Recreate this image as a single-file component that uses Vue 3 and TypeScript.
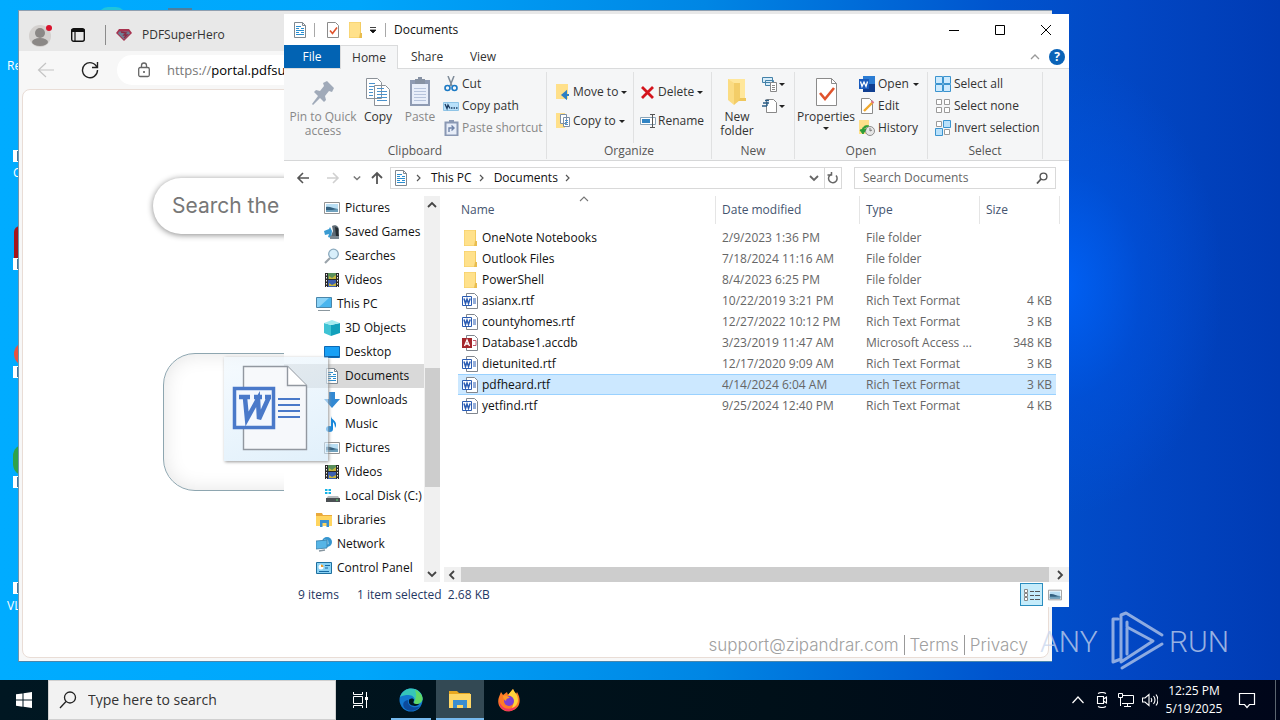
<script setup lang="ts">
interface TreeItem {
  icon: string
  label: string
  root?: boolean
  active?: boolean
}
interface FileRow {
  icon: string
  name: string
  date: string
  type: string
  size: string
  selected?: boolean
}

const tree: TreeItem[] = [
  { icon: 'picture', label: 'Pictures' },
  { icon: 'games', label: 'Saved Games' },
  { icon: 'searches', label: 'Searches' },
  { icon: 'video', label: 'Videos' },
  { icon: 'pc', label: 'This PC', root: true },
  { icon: 'cube', label: '3D Objects' },
  { icon: 'desktop', label: 'Desktop' },
  { icon: 'doc', label: 'Documents', active: true },
  { icon: 'download', label: 'Downloads' },
  { icon: 'music', label: 'Music' },
  { icon: 'picture', label: 'Pictures' },
  { icon: 'video', label: 'Videos' },
  { icon: 'disk', label: 'Local Disk (C:)' },
  { icon: 'libraries', label: 'Libraries', root: true },
  { icon: 'network', label: 'Network', root: true },
  { icon: 'control', label: 'Control Panel', root: true },
]

const files: FileRow[] = [
  { icon: 'folder', name: 'OneNote Notebooks', date: '2/9/2023 1:36 PM', type: 'File folder', size: '' },
  { icon: 'folder', name: 'Outlook Files', date: '7/18/2024 11:16 AM', type: 'File folder', size: '' },
  { icon: 'folder', name: 'PowerShell', date: '8/4/2023 6:25 PM', type: 'File folder', size: '' },
  { icon: 'rtf', name: 'asianx.rtf', date: '10/22/2019 3:21 PM', type: 'Rich Text Format', size: '4 KB' },
  { icon: 'rtf', name: 'countyhomes.rtf', date: '12/27/2022 10:12 PM', type: 'Rich Text Format', size: '3 KB' },
  { icon: 'access', name: 'Database1.accdb', date: '3/23/2019 11:47 AM', type: 'Microsoft Access ...', size: '348 KB' },
  { icon: 'rtf', name: 'dietunited.rtf', date: '12/17/2020 9:09 AM', type: 'Rich Text Format', size: '3 KB' },
  { icon: 'rtf', name: 'pdfheard.rtf', date: '4/14/2024 6:04 AM', type: 'Rich Text Format', size: '3 KB', selected: true },
  { icon: 'rtf', name: 'yetfind.rtf', date: '9/25/2024 12:40 PM', type: 'Rich Text Format', size: '4 KB' },
]
</script>

<template>
  <div class="screen">
    <svg class="defs" aria-hidden="true">
      <symbol id="i-doc" viewBox="0 0 16 16">
        <path d="M2.5.5h8l3 3v12h-11z" fill="#fff" stroke="#7f8890" />
        <path d="M10.500.5v3h3" fill="none" stroke="#7f8890" />
        <path d="M4 4.500h5M4 6.500h3M9 6.500h3M4 8.500h8M4 10.500h3M9 10.500h3M4 12.500h8" stroke="#2a8ed0" />
      </symbol>
      <symbol id="i-check" viewBox="0 0 16 16">
        <path d="M2.500.5h8l3 3v12h-11z" fill="#fff" stroke="#8b8b8b" />
        <path d="M5 8.500l2.500 3L12 5.500" fill="none" stroke="#e0532c" stroke-width="1.600" />
      </symbol>
      <symbol id="i-folder" viewBox="0 0 16 16">
        <path d="M2 0h12v11l1 1v4H2z" fill="#f3cc62" />
        <path d="M2.500.5H13v15H2.500z" fill="#ffe18b" />
        <path d="M13 11h2v5h-3z" fill="#e9bd4f" />
      </symbol>
      <symbol id="i-bigfolder" viewBox="0 0 20 28">
        <path d="M1 1h17v21H1z" fill="#ffe79b" />
        <path d="M1 1l6 4v22l-6-5z" fill="#fbdc83" />
        <path d="M7 5h6v17l-6 5z" fill="#f3cd68" />
        <path d="M13 20h6v3h-8z" fill="#efc75c" />
      </symbol>
      <symbol id="i-rtf" viewBox="0 0 16 16">
        <path d="M4.500.5h8l3 3v12h-11z" fill="#fff" stroke="#80868e" />
        <path d="M11 6h3M11 8h3M11 10h3" stroke="#2b5cb3" />
        <path d="M.5 3.500h9v9h-9z" fill="#fff" stroke="#2b5cb3" />
        <path d="M2 5.500l1.500 5L5 6l1.500 4.500L8.200 5.500" fill="none" stroke="#2b5cb3" stroke-width="1.500" />
      </symbol>
      <symbol id="i-access" viewBox="0 0 16 16">
        <path d="M4.500.5h8l3 3v12h-11z" fill="#fff" stroke="#80868e" />
        <path d="M11 5.500h3v5h-3" fill="none" stroke="#c2566b" />
        <path d="M0 3h10v10H0z" fill="#a4262c" />
        <path d="M2.500 11L5 5l2.500 6M3.500 9h3" fill="none" stroke="#fff" stroke-width="1.300" />
      </symbol>
      <symbol id="i-picture" viewBox="0 0 16 16">
        <path d="M.5 2.500h15v11H.5z" fill="#fff" stroke="#949494" />
        <path d="M2 4h12v8H2z" fill="#b9def3" />
        <path d="M2 7c4-1 7 2 12 2v3H2z" fill="#33607f" />
        <path d="M2 10c4 0 8 0 12-1v3H2z" fill="#6fa1bd" />
      </symbol>
      <symbol id="i-games" viewBox="0 0 16 16">
        <path d="M8 2c3-2 7 0 7 4l-1 6H7l2-5z" fill="#5d6a74" />
        <path d="M11 3l3 1 1 8h-3z" fill="#252c31" />
        <path d="M0 7l5-2 1-2 2 4-1 7-3-1 1-3-4 1z" fill="#3a9bd2" />
        <path d="M6 12h9v3H6z" fill="#7b8790" />
      </symbol>
      <symbol id="i-searches" viewBox="0 0 16 16">
        <path d="M1 15l5-5" stroke="#9aa3aa" stroke-width="2.200" />
        <circle cx="9.500" cy="6" r="4.800" fill="#d8effb" stroke="#8aa9bd" stroke-width="1.300" />
      </symbol>
      <symbol id="i-video" viewBox="0 0 16 16">
        <path d="M1 1h14v14H1z" fill="#2a2a2a" />
        <path d="M4 1h8v6H4z" fill="#5a8f5b" />
        <path d="M4 8h8v7H4z" fill="#3c5fb0" />
        <path d="M5 4l3 2 4-3v4H5zM5 11l3 2 4-2v3H5z" fill="#c7b53d" />
        <path d="M2.500 2v13M13.500 2v13" stroke="#eee" stroke-dasharray="1.500 1.500" />
      </symbol>
      <symbol id="i-pc" viewBox="0 0 16 16">
        <path d="M.5 1.500h15v10H.5z" fill="#49b5ee" stroke="#4a86aa" />
        <path d="M1 2h12L3 11H1z" fill="#8bd3f7" />
        <path d="M2 14.500h12" stroke="#8b979e" />
      </symbol>
      <symbol id="i-cube" viewBox="0 0 16 16">
        <path d="M0 3l7 2v11l-7-3z" fill="#3fc3d4" />
        <path d="M7 5l9-2v10l-9 3z" fill="#12a0bb" />
        <path d="M0 3l8-3 8 3-9 2z" fill="#a4ebf0" />
      </symbol>
      <symbol id="i-desktop" viewBox="0 0 16 16">
        <path d="M.5 2.500h15v11H.5z" fill="#18a0f5" stroke="#0b69b5" />
        <path d="M1 12.500h14" stroke="#0a5fa8" />
      </symbol>
      <symbol id="i-download" viewBox="0 0 16 16">
        <path d="M5 0h6v7h5l-8 9-8-9h5z" fill="#3289d3" />
      </symbol>
      <symbol id="i-music" viewBox="0 0 16 16">
        <path d="M7 0c0 4 6 4 5 10l-1 2c0-3-1-5-2-6v7H7z" fill="#1587dc" />
        <ellipse cx="5.500" cy="13" rx="3.500" ry="3" fill="#1587dc" />
      </symbol>
      <symbol id="i-disk" viewBox="0 0 16 16">
        <path d="M1 1h2.500v2H1zM4.500 1H7v2H4.500zM1 4h2.500v2H1zM4.500 4H7v2H4.500z" fill="#13b3e6" />
        <path d="M4 8h10l2 3H2z" fill="#b9bec2" />
        <path d="M2 10h14v4H2z" fill="#4b5054" />
        <path d="M12 12h2" stroke="#5ee06c" />
      </symbol>
      <symbol id="i-libraries" viewBox="0 0 16 16">
        <path d="M0 1h6l1 2h9v11H0z" fill="#e9a93c" />
        <path d="M0 4h16v10H0z" fill="#ffd560" />
        <path d="M4 15V8h9v7h-2.500v-4h-4v4z" fill="#3a8fd0" />
      </symbol>
      <symbol id="i-network" viewBox="0 0 16 16">
        <circle cx="11" cy="6" r="5" fill="#3595cf" />
        <path d="M8 3l4 1 1 4-3 1z" fill="#84c8ea" />
        <path d="M0 5l11-1v8L0 13z" fill="#57b5e6" stroke="#3a7fa8" stroke-width=".8" />
        <path d="M3 15l6-1" stroke="#8796a0" stroke-width="1.500" />
      </symbol>
      <symbol id="i-control" viewBox="0 0 16 16">
        <path d="M.5 2.500h15v11H.5z" fill="#8bd2f4" stroke="#1e6f9e" />
        <circle cx="5" cy="7" r="2.500" fill="#fff" />
        <path d="M5 7V4.500A2.500 2.500 0 0 1 7.500 7z" fill="#eb9c28" />
        <path d="M9 5.500h5M9 8h3M3 11.500h10" stroke="#1769a2" />
      </symbol>
      <symbol id="i-chev" viewBox="0 0 10 10">
        <path d="M1 3l4 4 4-4" fill="none" stroke="currentColor" stroke-width="1.800" />
      </symbol>
      <symbol id="i-drop" viewBox="0 0 8 8">
        <path d="M1 3h6L4 6z" fill="#222" />
      </symbol>
      <symbol id="i-cells" viewBox="0 0 16 16">
        <path d="M.5.5h7v7h-7zM8.500.5h7v7h-7zM.5 8.500h7v7h-7zM8.500 8.500h7v7h-7z" fill="#cdeafd" stroke="#3b94cf" />
      </symbol>
      <symbol id="i-cellsnone" viewBox="0 0 16 16">
        <path d="M1.500 1.500h5v5h-5zM9.500 1.500h5v5h-5zM1.500 9.500h5v5h-5zM9.500 9.500h5v5h-5z" fill="#fff" stroke="#9a9a9a" />
      </symbol>
      <symbol id="i-cellsinv" viewBox="0 0 16 16">
        <path d="M1.500 1.500h5v5h-5zM9.500 9.500h5v5h-5z" fill="#fff" stroke="#9a9a9a" />
        <path d="M8.500.5h7v7h-7zM.5 8.500h7v7h-7z" fill="#b9e1fb" stroke="#3b94cf" />
      </symbol>
    </svg>

    <main class="desktop">
      <i class="peek peek-teal"></i>
      <i class="peek peek-brown"></i>
      <span class="shortcut s1">Re</span>
      <span class="shortcut s2"><i class="arrow"></i>C</span>
      <span class="shortcut s3"><i class="blob red"></i><i class="arrow"></i></span>
      <span class="shortcut s4"><i class="blob coral"></i><i class="arrow"></i></span>
      <span class="shortcut s5"><i class="blob green"></i><i class="arrow"></i></span>
      <span class="shortcut s6"><i class="arrow"></i>VL</span>

      <section class="browser">
        <div class="tabs">
          <svg class="avatar" viewBox="0 0 24 24">
            <circle cx="11" cy="13" r="11" fill="#d3d0ce" />
            <circle cx="11" cy="10" r="5" fill="#8b8886" />
            <ellipse cx="11" cy="19" rx="8" ry="4" fill="#8b8886" />
            <circle cx="20" cy="5" r="3" fill="#d8122c" />
          </svg>
          <svg class="spaces" viewBox="0 0 16 16">
            <rect x="1.700" y="1.700" width="12.600" height="12.600" rx="2" fill="none" stroke="#111" stroke-width="1.400" />
            <path d="M1.500 3.500h13" stroke="#111" stroke-width="3" />
            <path d="M5 5v9" stroke="#111" stroke-width="1.200" />
          </svg>
          <i class="divider"></i>
          <svg class="gem" viewBox="0 0 16 12">
            <path d="M3 0h10l3 4-8 8-8-8z" fill="#a8324f" />
            <path d="M3 2.500h10l1 2-6 6-6-6z" fill="#6f8096" />
            <path d="M5 3l5 1-2 2 3 0-3 3" fill="none" stroke="#8d2943" stroke-width="1.400" />
          </svg>
          <span class="tab-title">PDFSuperHero</span>
        </div>
        <div class="toolbar">
          <button class="nav-btn faded" aria-label="Back">
            <svg viewBox="0 0 18 18"><path d="M17 9H1m8-7L1.500 9 9 16" fill="none" stroke="#c4c4c4" stroke-width="1.200" /></svg>
          </button>
          <button class="nav-btn" aria-label="Refresh">
            <svg viewBox="0 0 18 18"><path d="M16 6.500A7.500 7.500 0 1 0 16.500 9M16.500 1v5.500H11" fill="none" stroke="#222" stroke-width="1.400" /></svg>
          </button>
          <div class="url">
            <svg viewBox="0 0 14 16"><rect x="1.700" y="5.500" width="10.600" height="9" rx="1.500" fill="none" stroke="#666" stroke-width="1.300" /><path d="M4.500 5V3.500a2.500 2.500 0 0 1 5 0V5" fill="none" stroke="#666" stroke-width="1.300" /><circle cx="7" cy="10" r="1" fill="#555" /></svg>
            <span><em>https://</em>portal.pdfsu</span>
          </div>
        </div>
        <div class="page">
          <input class="pill" type="text" placeholder="Search the" aria-label="Search the" />
          <div class="dropzone"></div>
          <footer class="page-foot">
            <a href="#">support@zipandrar.com</a><a href="#">Terms</a><a href="#">Privacy</a>
          </footer>
        </div>
      </section>

      <section class="explorer">
        <header class="titlebar">
          <svg class="i16"><use href="#i-doc" /></svg>
          <i class="tsep first"></i>
          <svg class="i16"><use href="#i-check" /></svg>
          <svg class="i16 qa"><use href="#i-folder" /></svg>
          <svg class="qdrop" viewBox="0 0 8 8"><path d="M1 1.500h6M1 4h6L4 7z" fill="#111" stroke="#111" stroke-width=".8" /></svg>
          <i class="tsep"></i>
          <h1>Documents</h1>
          <div class="winbtns">
            <button aria-label="Minimize"><svg viewBox="0 0 12 12"><path d="M1 6.500h10" stroke="#000" /></svg></button>
            <button aria-label="Maximize"><svg viewBox="0 0 12 12"><path d="M1.500 1.500h9v9h-9z" fill="none" stroke="#000" /></svg></button>
            <button aria-label="Close"><svg viewBox="0 0 12 12"><path d="M1 1l10 10M11 1L1 11" stroke="#000" /></svg></button>
          </div>
        </header>
        <nav class="menu">
          <button class="file">File</button>
          <button class="home">Home</button>
          <button>Share</button>
          <button>View</button>
          <span class="menu-end">
            <svg class="up" viewBox="0 0 10 10"><path d="M1 7l4-4 4 4" fill="none" stroke="#999" stroke-width="1.300" /></svg>
            <button class="help" aria-label="Help">?</button>
          </span>
        </nav>

        <div class="ribbon">
          <div class="group g-clip">
            <div class="tools">
              <button class="big dim pin">
                <svg viewBox="0 0 32 32"><path d="M16 7l4-2 7 7-2 4-3-1-4 5 1 4-2 2-4-4-7 7-1-1 6-8-4-4 2-2 4 1 4-5z" fill="#a0aab9" /></svg>
                <span>Pin to Quick</span>
                <span>access</span>
              </button>
              <button class="big copy">
                <svg viewBox="0 0 32 32">
                  <path d="M4.500 2.500h11l4 4v16h-15zM12.500 9.500h11l4 4v16h-15z" fill="#fff" stroke="#8b9198" />
                  <path d="M7 7.500h6M7 10.500h5M7 13.500h4M7 16.500h4M7 19.500h4M15 15.500h10M15 18.500h10M15 21.500h10M15 24.500h10M15 12.500h7" stroke="#4b92cc" />
                </svg>
                <span>Copy</span>
              </button>
              <button class="big dim paste">
                <svg viewBox="0 0 32 32">
                  <path d="M6 4h20v26H6z" fill="#8f9bb3" />
                  <path d="M8 8h16v20H8z" fill="#e8eefa" />
                  <path d="M11 3h3V1h4v2h3v5H11z" fill="#8792a4" />
                  <path d="M10 12.500h12M10 15.500h12M10 18.500h12M10 21.500h12M10 24.500h12" stroke="#b6c3dc" />
                </svg>
                <span>Paste</span>
              </button>
              <div class="stack">
                <button><svg class="i16" viewBox="0 0 16 16"><path d="M5 0l4 10M11 0L7 10" stroke="#7e8b98" stroke-width="1.500" /><circle cx="4.500" cy="12" r="2.500" fill="none" stroke="#1b79c4" stroke-width="1.600" /><circle cx="11.500" cy="12" r="2.500" fill="none" stroke="#1b79c4" stroke-width="1.600" /></svg>Cut</button>
                <button><svg class="i16" viewBox="0 0 16 16"><path d="M.5 4.500h15v8H.5z" fill="#b9e0fa" stroke="#8fc4e6" /><path d="M2 6l2 4.500L5 7l2 3.500M8 10h1.500M10.500 10H12M13 10h1.500" fill="none" stroke="#1c3d63" stroke-width="1.300" /></svg>Copy path</button>
                <button class="dim"><svg class="i16" viewBox="0 0 16 16"><path d="M2.500 2.500h12v13h-12z" fill="#e7edf8" stroke="#8a98b3" stroke-width="2" /><path d="M6 0h5v3H6z" fill="#8a98b3" /><path d="M6 12V8h5M8.500 5.500L11 8l-2.500 2.500" fill="none" stroke="#6f83a8" stroke-width="1.400" /></svg>Paste shortcut</button>
              </div>
            </div>
            <div class="caption">Clipboard</div>
          </div>
          <div class="group g-org">
            <div class="tools">
              <div class="stack loose left">
                <button><svg class="i16" viewBox="0 0 16 16"><path d="M1 0h12v15H1z" fill="#ffe08a" /><path d="M14 11h-4M11 8l-3.500 3 3.500 3z" fill="#2e7fc4" stroke="#2e7fc4" stroke-width="2" /></svg>Move to<svg class="drop"><use href="#i-drop" /></svg></button>
                <button><svg class="i16" viewBox="0 0 16 16"><path d="M1 0h9v15H1z" fill="#ffe08a" /><path d="M5.500 1.500h6v9h-6zM8.500 4.500h6v9h-6z" fill="#fff" stroke="#7c8fa5" /><path d="M10 7.500h3M10 9.500h3M10 11.500h3" stroke="#4b92cc" /></svg>Copy to<svg class="drop"><use href="#i-drop" /></svg></button>
              </div>
              <div class="stack loose right">
                <button><svg class="i16" viewBox="0 0 16 16"><path d="M2 3l11 11M13 3L2 14" stroke="#d4141c" stroke-width="2.800" /></svg>Delete<svg class="drop"><use href="#i-drop" /></svg></button>
                <button><svg class="i16" viewBox="0 0 16 16"><path d="M.5 4.500h15v7H.5z" fill="#fff" stroke="#8aa4b8" /><path d="M2 6h8v4H2z" fill="#2f83c4" /><path d="M10 1.500h5M10 14.500h5M12.500 1v14" stroke="#555" /></svg>Rename</button>
              </div>
            </div>
            <div class="caption">Organize</div>
          </div>
          <div class="group g-new">
            <div class="tools">
              <button class="big newf">
                <svg viewBox="-6 -2 32 32"><use href="#i-bigfolder" width="20" height="28" /></svg>
                <span>New</span>
                <span>folder</span>
              </button>
              <div class="stack tight">
                <button aria-label="New item"><svg class="i16" viewBox="0 0 16 16"><path d="M.5 1.500h10v5H.5zM3.500 4.500h8v5h-8z" fill="#d7ecf9" stroke="#4381a8" /><path d="M8.500 6.500h6v9h-6z" fill="#fff" stroke="#888" /><path d="M10 9.500h3M10 11.500h3M10 13.500h3" stroke="#888" /></svg><svg class="drop"><use href="#i-drop" /></svg></button>
                <button aria-label="Easy access"><svg class="i16" viewBox="0 0 16 16"><path d="M4.500 1.500h7l3 3v10h-10z" fill="#fff" stroke="#888" /><path d="M0 8h5M1 5h6M3 2.500h4M5 4v4" stroke="#2a5d86" stroke-width="1.300" /></svg><svg class="drop"><use href="#i-drop" /></svg></button>
              </div>
            </div>
            <div class="caption">New</div>
          </div>
          <div class="group g-open">
            <div class="tools">
              <button class="big props">
                <svg viewBox="0 0 32 32"><path d="M6.500 2.500h15l5 5v22h-20z" fill="#fff" stroke="#8b8b8b" /><path d="M21.500 2.500v5h5" fill="none" stroke="#8b8b8b" /><path d="M10 17l5 6 9-11" fill="none" stroke="#e0532c" stroke-width="2.600" /></svg>
                <span>Properties</span>
                <svg class="drop"><use href="#i-drop" /></svg>
              </button>
              <div class="stack">
                <button><svg class="i16" viewBox="0 0 16 16"><path d="M4 0h12v16H4z" fill="#2b7cd3" /><path d="M4 8h12v8H4z" fill="#103f91" /><path d="M0 3h10v10H0z" fill="#185abd" /><path d="M1.500 5.500L3 10.500l2-4.500 2 4.500 1.500-5" fill="none" stroke="#fff" stroke-width="1.300" /></svg>Open<svg class="drop"><use href="#i-drop" /></svg></button>
                <button><svg class="i16" viewBox="0 0 16 16"><path d="M2.500.5h8l3 3v12h-11z" fill="#fff" stroke="#8b8b8b" /><path d="M5 13l9-9" stroke="#f0a92f" stroke-width="2.400" /><path d="M12.500 3l2 2" stroke="#d8708b" stroke-width="2" /></svg>Edit</button>
                <button><svg class="i16" viewBox="0 0 16 16"><path d="M0 0h10v14H0z" fill="#ffe08a" /><circle cx="11" cy="11" r="4.500" fill="#e6e6e6" stroke="#8d8d8d" /><path d="M11 8v3l2-1" fill="none" stroke="#777" /><path d="M3 10c1-4 4-5 7-4M1 10l3 4 3-5z" fill="#2c9d38" stroke="#2c9d38" /></svg>History</button>
              </div>
            </div>
            <div class="caption">Open</div>
          </div>
          <div class="group g-sel">
            <div class="tools">
              <div class="stack">
                <button><svg class="i16"><use href="#i-cells" /></svg>Select all</button>
                <button><svg class="i16"><use href="#i-cellsnone" /></svg>Select none</button>
                <button><svg class="i16"><use href="#i-cellsinv" /></svg>Invert selection</button>
              </div>
            </div>
            <div class="caption">Select</div>
          </div>
        </div>

        <div class="navrow">
          <button aria-label="Back"><svg viewBox="0 0 14 14"><path d="M13 7H2M7 2L2 7l5 5" fill="none" stroke="#555" stroke-width="1.600" /></svg></button>
          <button aria-label="Forward" class="fwd"><svg viewBox="0 0 14 14"><path d="M1 7h11M7 2l5 5-5 5" fill="none" stroke="#d0d0d0" stroke-width="1.600" /></svg></button>
          <button aria-label="Recent" class="recent"><svg viewBox="0 0 10 10"><use href="#i-chev" /></svg></button>
          <button aria-label="Up"><svg viewBox="0 0 14 14"><path d="M7 13V2M2 7l5-5 5 5" fill="none" stroke="#555" stroke-width="1.800" /></svg></button>
          <div class="address">
            <svg class="i16"><use href="#i-doc" /></svg>
            <svg class="crumb" viewBox="0 0 8 8"><path d="M2 1l3 3-3 3" fill="none" stroke="#555" stroke-width="1.200" /></svg>
            <span>This PC</span>
            <svg class="crumb" viewBox="0 0 8 8"><path d="M2 1l3 3-3 3" fill="none" stroke="#555" stroke-width="1.200" /></svg>
            <span>Documents</span>
            <svg class="crumb" viewBox="0 0 8 8"><path d="M2 1l3 3-3 3" fill="none" stroke="#555" stroke-width="1.200" /></svg>
            <button class="dropdown" aria-label="Previous locations"><svg viewBox="0 0 10 10"><use href="#i-chev" /></svg></button>
            <button class="reload" aria-label="Refresh"><svg viewBox="0 0 12 12"><path d="M4 2.500a4.300 4.300 0 1 0 5 1M4.500 0v3h-4" fill="none" stroke="#666" stroke-width="1.500" /></svg></button>
          </div>
          <label class="find">
            <input type="text" placeholder="Search Documents" aria-label="Search Documents" />
            <svg viewBox="0 0 12 12"><circle cx="7.500" cy="4.500" r="3.400" fill="none" stroke="#555" stroke-width="1.400" /><path d="M5 7l-4 4.500" stroke="#555" stroke-width="1.800" /></svg>
          </label>
        </div>

        <div class="body">
          <ul class="tree">
            <li v-for="(t, i) in tree" :key="i" :class="{ root: t.root, active: t.active }">
              <svg class="i16"><use :href="'#i-' + t.icon" /></svg>{{ t.label }}
            </li>
          </ul>
          <div class="vscroll">
            <svg viewBox="0 0 10 10"><path d="M1 7l4-4 4 4" fill="none" stroke="#444" stroke-width="1.800" /></svg>
            <i></i>
            <svg viewBox="0 0 10 10"><use href="#i-chev" /></svg>
          </div>
          <div class="content">
            <table>
              <colgroup><col class="c1" /><col class="c2" /><col class="c3" /><col class="c4" /><col class="c5" /></colgroup>
              <thead>
                <tr>
                  <th class="sorted">Name<svg viewBox="0 0 10 10"><path d="M1 7l4-4 4 4" fill="none" stroke="#777" stroke-width="1.100" /></svg></th>
                  <th>Date modified</th>
                  <th>Type</th>
                  <th class="nobar">Size</th>
                  <th></th>
                </tr>
              </thead>
              <tbody>
                <tr v-for="f in files" :key="f.name" :class="{ selected: f.selected }">
                  <td class="name"><span><svg class="i16"><use :href="'#i-' + f.icon" /></svg>{{ f.name }}</span></td>
                  <td>{{ f.date }}</td>
                  <td>{{ f.type }}</td>
                  <td class="size">{{ f.size }}</td>
                </tr>
              </tbody>
            </table>
            <div class="hscroll">
              <svg viewBox="0 0 10 10"><path d="M7 1L3 5l4 4" fill="none" stroke="#444" stroke-width="1.800" /></svg>
              <i></i>
              <svg viewBox="0 0 10 10"><path d="M3 1l4 4-4 4" fill="none" stroke="#444" stroke-width="1.800" /></svg>
            </div>
          </div>
        </div>

        <footer class="status">
          <span class="count">9 items</span>
          <span>1 item selected&nbsp; 2.68 KB</span>
          <span class="views">
            <button class="on" aria-label="Details"><svg viewBox="0 0 16 14"><path d="M.5 1.500h3v3h-3zM.5 5.500h3v3h-3zM.5 9.500h3v3h-3z" fill="#fff" stroke="#888" /><path d="M6 3.500h4M11 3.500h5M6 7.500h4M11 7.500h5M6 11.500h4M11 11.500h5" stroke="#555" /></svg></button>
            <button aria-label="Large icons"><svg viewBox="0 0 16 16"><use href="#i-picture" /></svg></button>
          </span>
        </footer>
      </section>

      <div class="drag">
        <svg viewBox="0 0 80 88">
          <path d="M11.500 1.500h44l19 19v64h-63z" fill="#f7f8fb" fill-opacity=".9" stroke="#9298a0" stroke-width="1.400" />
          <path d="M55.500 1.500v19h19" fill="#fff" stroke="#9298a0" stroke-width="1.400" />
          <path d="M46 34h22M46 40h22M46 46h22M46 52h22" stroke="#4a79c9" stroke-width="2" />
          <path d="M2.500 23.500h39v39h-39z" fill="#f4f8fe" stroke="#4a79c9" stroke-width="3.500" />
          <path d="M7 32h11M22 32h8M33 32h6M13 33l2 21 11-20 1 20 10-22" fill="none" stroke="#4a79c9" stroke-width="4.500" />
        </svg>
      </div>

      <svg class="mark" viewBox="0 0 194 64">
        <g class="mark-text">
          <text x="2" y="44">ANY</text>
          <text x="131" y="44">RUN</text>
        </g>
        <path d="M80 11h-5v43l8-3V7l5-2 36 22M84 60l40-24M89 14v32M89 19l26 14-32 21" fill="none" stroke="#c9d6ee" stroke-opacity=".7" stroke-width="3" stroke-linejoin="round" stroke-linecap="round" />
      </svg>
    </main>

    <footer class="taskbar">
      <button class="task start" aria-label="Start"><svg viewBox="0 0 16 16"><path d="M0 2.300L6.500 1.400v6.200H0zM7.500 1.200L16 0v7.600H7.500zM0 8.500h6.500v6.200L0 13.800zM7.500 8.500H16V16l-8.500-1.200z" fill="#fff" /></svg></button>
      <label class="tasksearch">
        <svg viewBox="0 0 18 18"><circle cx="11" cy="6.500" r="5.500" fill="none" stroke="#222" stroke-width="1.300" /><path d="M7 10.500l-6 6.500" stroke="#222" stroke-width="1.300" /></svg>
        <input type="text" placeholder="Type here to search" aria-label="Type here to search" />
      </label>
      <button class="task view" aria-label="Task view"><svg viewBox="0 0 16 16"><path d="M1.500 0v2.500h9V0M1.500 16v-2.500h9V16M1.500 4.500h9v7h-9zM14.500 0v16" fill="none" stroke="#fff" /><path d="M13 5h3v3h-3z" fill="#fff" /></svg></button>
      <button class="task open" aria-label="Edge">
        <svg class="i24" viewBox="0 0 24 24">
          <circle cx="12" cy="12" r="11.500" fill="#1378d0" />
          <path d="M1 9C3 3 8 .5 12 .5c7 0 12 5 11.500 10.500-.5 4-4 5.500-7 5-2-.5-2-1.500-1-3 1-3-2-6-6-6-3 0-6 .5-8.500 2z" fill="#36c6b9" />
          <path d="M16 2c5 2 8 6 7.500 9.500-.5 3-4 5-7 4.500-2-.5-2-1.500-1-3 2-4 2-7 .5-11z" fill="#60d867" />
          <path d="M9 12c-1 5 4 9 12 6.500-4 5-12 6-16 1-2-4 0-7 4-7.500z" fill="#0c4a9c" />
          <path d="M10 12c1-2 5-2 5 0 0 1-1 2-.5 3 1 1 4 1.500 6 .5-1 2-4 3-7 2-3-.5-4-3-3.500-5.500z" fill="#001620" />
        </svg>
      </button>
      <button class="task open current" aria-label="File Explorer">
        <svg class="i24" viewBox="0 0 24 24"><path d="M1 3h8l2 2h11v15H1z" fill="#e9a820" /><path d="M1 6h22v14H1z" fill="#ffd766" /><path d="M5 20v-8h14v8h-4v-3H9v3z" fill="#3b8ed0" /></svg>
      </button>
      <button class="task" aria-label="Firefox">
        <svg class="i24" viewBox="0 0 24 24"><path d="M2 9l2-5 2 3 4-3 1 3 5-6c1 2 1 3 3 5l1-2c5 8 3 17-6 19C5 25-1 17 2 9z" fill="#ff7a26" /><path d="M16 1c1 3 5 5 5 11 0 4-3 7-6 8 2-4 3-12-4-13z" fill="#ffd43b" /><path d="M2 12c2 9 10 11 18 6-3 6-12 8-17 0z" fill="#f23660" /><circle cx="12" cy="13" r="5" fill="#7c3fd4" /><path d="M6 8c3-1 5 0 7 2-3 0-4 1-4 3-2-1-3-3-3-5z" fill="#ff9a2b" /></svg>
      </button>
      <div class="tray">
        <svg viewBox="0 0 16 16"><path d="M2.500 11L8 5l5.500 6" fill="none" stroke="#fff" stroke-width="1.200" /></svg>
        <svg viewBox="0 0 16 16"><path d="M3.500 4.500h6v7h-6zM9.500 7l3-2v6l-3-2M4 1.500q4-2 8 0M4 14.500q4 2 8 0" fill="none" stroke="#fff" stroke-width="1.100" /></svg>
        <svg viewBox="0 0 16 16"><path d="M4 3.500h11.500v8H4M9.500 11.500v3M6 14.500h7M.5 1.500h4v4h-4zM2.500 5.500v8.500" fill="none" stroke="#fff" /></svg>
        <svg viewBox="0 0 16 16"><path d="M.5 6v4h2.500l4 3.500v-11L3 6zM9 6q1.500 2 0 4M11.500 4q3 4 0 8M14 2.500q4 5.500 0 11" fill="none" stroke="#fff" stroke-width="1.100" /></svg>
        <div class="clock"><span>12:25 PM</span><span>5/19/2025</span></div>
        <svg class="note" viewBox="0 0 18 18"><path d="M1.500 2.500h15v11h-5L9 16.500l-2.500-3h-5z" fill="none" stroke="#fff" stroke-width="1.200" /></svg>
      </div>
    </footer>
  </div>
</template>

<style>
body {
  margin: 0;
}
</style>

<style scoped>
* {
  box-sizing: border-box;
}
.screen {
  display: flex;
  flex-direction: column;
  height: 100vh;
  overflow: hidden;
  font: 12px/16px "Open Sans", "Noto Sans", sans-serif;
  color: #111;
}
.defs {
  position: absolute;
  width: 0;
  height: 0;
}
button {
  font: inherit;
  color: inherit;
  background: none;
  border: 0;
  padding: 0;
  margin: 0;
}
input {
  font: inherit;
  border: 0;
  outline: 0;
  padding: 0;
  background: none;
  min-width: 0;
}
svg {
  display: block;
  flex: none;
}
.i16 {
  width: 16px;
  height: 16px;
}
.i24 {
  width: 24px;
  height: 24px;
}
.drop {
  width: 8px;
  height: 8px;
}

/* desktop */
.desktop {
  position: relative;
  flex: 1;
  min-height: 0;
  overflow: hidden;
  background:
    radial-gradient(ellipse 160px 230px at 83% 42%, #0060f4 0%, rgba(0, 84, 226, 0.5) 50%, rgba(0, 70, 200, 0) 100%),
    linear-gradient(90deg, #00acff 0%, #00a6fb 28%, #0086e4 55%, #0054ce 78%, #0247c4 88%, #003bb4 100%);
}
.peek {
  position: absolute;
  top: 7px;
  height: 10px;
}
.peek-teal {
  left: 98px;
  width: 28px;
  border-radius: 14px 14px 0 0;
  background: #20c4dc;
}
.peek-brown {
  left: 168px;
  width: 24px;
  top: 8px;
  background: #4d7f9f;
}
.shortcut {
  position: absolute;
  left: 7px;
  width: 20px;
  color: #fff;
  display: flex;
  flex-direction: column;
}
.arrow {
  width: 8px;
  height: 12px;
  margin-left: 6px;
  background: linear-gradient(90deg, #fff 50%, #44749c 50%);
  border: 1px solid #fff;
}
.blob {
  width: 12px;
  height: 32px;
  margin-left: 7px;
}
.red {
  background: #a5161c;
  border-radius: 6px 0 0 0;
}
.coral {
  background: #e8533f;
  border-radius: 12px 0 0 12px;
  height: 24px;
}
.green {
  background: #2fa24a;
  border-radius: 12px 0 0 12px;
  margin-left: 6px;
}
.s1 { top: 58px; }
.s2 {
  top: 150px;
  gap: 3px;
  text-indent: 6px;
}
.s3 { top: 226px; }
.s4 { top: 342px; }
.s5 { top: 444px; }
.s6 {
  top: 582px;
  gap: 4px;
}

/* browser */
.browser {
  position: absolute;
  left: 18px;
  top: 10px;
  right: 228px;
  bottom: 18px;
  display: flex;
  flex-direction: column;
  background: #f7f7f7;
  border-top: 1px solid #8f9fb0;
  border-left: 1px solid #6f96ad;
  border-bottom: 1px solid #4c86ab;
}
.tabs {
  height: 40px;
  background: #e8e8e8;
  display: flex;
  align-items: center;
  padding: 8px 0 0 10px;
}
.avatar {
  width: 24px;
  height: 24px;
}
.spaces {
  width: 16px;
  height: 16px;
  margin-left: 17px;
}
.divider {
  width: 1px;
  height: 20px;
  background: #8b8b8b;
  margin: 0 10px 0 19px;
}
.gem {
  width: 16px;
  height: 12px;
}
.tab-title {
  margin-left: 10px;
  color: #333;
}
.toolbar {
  height: 38px;
  display: flex;
  align-items: center;
  padding-left: 18px;
}
.nav-btn svg {
  width: 18px;
  height: 18px;
}
.nav-btn + .nav-btn {
  margin-left: 26px;
}
.url {
  flex: 1;
  height: 30px;
  margin-left: 18px;
  border-radius: 15px 0 0 15px;
  background: #fff;
  display: flex;
  align-items: center;
  gap: 16px;
  padding-left: 20px;
  font-size: 13px;
  color: #000;
}
.url svg {
  width: 14px;
  height: 16px;
}
.url em {
  font-style: normal;
  color: #777;
}
.page {
  flex: 1;
  min-height: 0;
  margin: 0 3px 3px;
  background: #fff;
  border: 1px solid #e9ddd6;
  border-radius: 8px;
  display: flex;
  flex-direction: column;
  align-items: stretch;
  padding: 88px 20px 0 130px;
}
.pill {
  height: 56px;
  flex: none;
  border-radius: 28px;
  box-shadow: 0 1px 6px #888;
  padding-left: 19px;
  font: 21px/56px Inter, "Open Sans", sans-serif;
}
.pill::placeholder {
  color: #777;
  opacity: 1;
}
.dropzone {
  flex: none;
  height: 138px;
  margin: 119px 0 0 10px;
  border: 1px solid #8ea6b0;
  border-radius: 32px;
  box-shadow: inset 0 0 20px #e4e4e4;
}
.page-foot {
  margin-top: auto;
  display: flex;
  justify-content: flex-end;
  padding-bottom: 2px;
  font: 17px/20px Inter, "Open Sans", sans-serif;
  font-weight: 300;
}
.page-foot a {
  color: #a0a0a0;
  text-decoration: none;
  padding: 0 5px;
}
.page-foot a + a {
  border-left: 1px solid #999;
}
.page-foot a:last-child {
  padding-right: 0;
}

/* file window */
.explorer {
  position: absolute;
  left: 284px;
  top: 14px;
  right: 211px;
  bottom: 73px;
  background: #fff;
  display: flex;
  flex-direction: column;
}
.titlebar {
  height: 31px;
  flex: none;
  display: flex;
  align-items: center;
  padding-left: 8px;
}
.tsep {
  width: 1px;
  height: 14px;
  background: #a8a8a8;
  margin: 0 8px 0 8px;
}
.tsep.first {
  margin: 0 10px 0 6px;
}
.qa {
  margin: 0 6px;
}
.qdrop {
  width: 8px;
  height: 8px;
}
h1 {
  margin: 0;
  font-size: 12px;
  font-weight: 400;
}
.winbtns {
  margin-left: auto;
  display: flex;
}
.winbtns button {
  width: 46px;
  height: 30px;
  display: grid;
  place-items: center;
}
.winbtns svg {
  width: 12px;
  height: 12px;
}
.menu {
  height: 24px;
  flex: none;
  display: flex;
  border-bottom: 1px solid #dadbdc;
}
.menu button {
  width: 56px;
  height: 24px;
  color: #333;
}
.menu .file {
  background: #0263b3;
  color: #fff;
  height: 23px;
}
.menu .home {
  width: 58px;
  background: #f5f6f7;
  border: 1px solid #dadbdc;
  border-bottom: 0;
  margin-right: 1px;
}
.menu-end {
  margin-left: auto;
  display: flex;
  align-items: center;
  gap: 9px;
  padding-right: 4px;
}
.up {
  width: 10px;
  height: 10px;
}
.menu .help {
  width: 16px;
  height: 16px;
  line-height: 16px;
  border-radius: 8px;
  background: #0a63b8;
  color: #fff;
  font-weight: 700;
}

.ribbon {
  height: 92px;
  flex: none;
  display: flex;
  background: #f5f6f7;
  border-bottom: 1px solid #d6d7d8;
  padding: 3px 0 1px;
  color: #333;
}
.group {
  display: flex;
  flex-direction: column;
  border-right: 1px solid #e0e1e2;
}
.g-clip { width: 263px; }
.g-org { width: 165px; }
.g-new { width: 83px; }
.g-open { width: 133px; }
.g-sel { width: 115px; }
.tools {
  flex: 1;
  display: flex;
}
.caption {
  height: 16px;
  text-align: center;
  color: #555;
}
.big {
  display: flex;
  flex-direction: column;
  align-items: center;
  line-height: 14px;
  padding-top: 4px;
  white-space: nowrap;
}
.big > svg:first-child {
  width: 32px;
  height: 32px;
  margin-bottom: 2px;
}
.dim {
  color: #888;
}
.big.pin { width: 78px; }
.big.copy { width: 32px; }
.big.paste { width: 52px; }
.stack {
  display: flex;
  flex-direction: column;
  align-items: flex-start;
  padding-top: 1px;
}
.stack button {
  height: 22px;
  display: flex;
  align-items: center;
  gap: 3px;
  white-space: nowrap;
}
.stack.tight button {
  gap: 0;
}
.loose {
  padding-top: 5px;
}
.loose button {
  height: 29px;
}
.left {
  width: 86px;
  padding-left: 8px;
}
.left button,
.right button {
  gap: 2px;
}
.right {
  border-left: 1px solid #e0e1e2;
  padding-left: 6px;
}
.big.newf { width: 50px; }
.big.props { width: 62px; }
.g-open .stack { padding-left: 2px; }
.g-sel .stack { padding-left: 7px; }
.g-clip .stack { margin-left: -3px; }

.navrow {
  height: 35px;
  flex: none;
  display: flex;
  align-items: center;
  padding: 0 13px 2px 12px;
}
.navrow > button svg {
  width: 14px;
  height: 14px;
}
.navrow > .fwd {
  margin-left: 16px;
}
.navrow > .recent {
  margin: 0 9px 0 13px;
  color: #777;
}
.navrow > .recent svg {
  width: 8px;
  height: 8px;
}
.address {
  flex: 1;
  height: 22px;
  margin-left: 6px;
  border: 1px solid #d9d9d9;
  display: flex;
  align-items: center;
  padding-left: 2px;
}
.crumb {
  width: 8px;
  height: 8px;
  margin: 0 8px 0 6px;
}
.dropdown {
  margin-left: auto;
  padding: 0 5px;
  color: #666;
}
.dropdown svg {
  width: 10px;
  height: 10px;
}
.reload {
  height: 20px;
  width: 17px;
  border-left: 1px solid #d9d9d9;
  padding-left: 2px;
}
.reload svg {
  width: 12px;
  height: 12px;
}
.find {
  width: 202px;
  height: 22px;
  margin-left: 12px;
  border: 1px solid #d9d9d9;
  display: flex;
  align-items: center;
  padding: 0 7px 0 8px;
}
.find input {
  flex: 1;
}
.find input::placeholder {
  color: #666;
  opacity: 1;
}
.find svg {
  width: 12px;
  height: 12px;
}

.body {
  flex: 1;
  min-height: 0;
  display: flex;
}
.tree {
  width: 140px;
  list-style: none;
  margin: 0;
  padding: 0;
  overflow: hidden;
}
.tree li {
  height: 24px;
  display: flex;
  align-items: center;
  gap: 5px;
  padding-left: 40px;
  white-space: nowrap;
}
.tree .root {
  padding-left: 32px;
}
.tree .active {
  background: #d9d9d9;
}
.vscroll {
  width: 16px;
  background: #f0f0f0;
  display: flex;
  flex-direction: column;
  align-items: center;
  justify-content: space-between;
  padding: 4px 0 3px;
  color: #444;
}
.vscroll svg,
.hscroll svg {
  width: 10px;
  height: 10px;
}
.vscroll i {
  width: 15px;
  height: 119px;
  background: #cdcdcd;
  margin-top: 76px;
}
.content {
  flex: 1;
  min-width: 0;
  display: flex;
  flex-direction: column;
  overflow: hidden;
}
table {
  table-layout: fixed;
  border-collapse: separate;
  border-spacing: 0;
  width: 602px;
  margin-left: 18px;
}
.c1 { width: 258px; }
.c2 { width: 144px; }
.c3 { width: 120px; }
.c4 { width: 76px; }
.c5 { width: 4px; }
th {
  height: 28px;
  padding: 0 0 0 6px;
  text-align: left;
  font-weight: 400;
  color: #44546f;
  border-right: 1px solid #e5e5e5;
  white-space: nowrap;
}
th:first-child {
  padding-left: 3px;
}
th.nobar {
  border-right: 0;
}
th:last-child {
  padding: 0;
}
.sorted {
  position: relative;
}
.sorted svg {
  position: absolute;
  top: -2px;
  left: 47%;
  width: 10px;
  height: 10px;
}
tbody::before {
  content: "";
  display: block;
  height: 3px;
}
td {
  height: 21px;
  padding: 0 0 0 6px;
  color: #666;
  white-space: nowrap;
}
td.name {
  padding-left: 4px;
  color: #111;
}
td.name span {
  display: flex;
  align-items: center;
  gap: 4px;
}
td.size {
  text-align: right;
  padding: 0 4px 0 0;
}
.selected td {
  background: #cce8ff;
  box-shadow: inset 0 1px #99d1ff, inset 0 -1px #99d1ff;
}
.hscroll {
  margin: auto 0 0 4px;
  height: 15px;
  background: #f0f0f0;
  display: flex;
  align-items: center;
  padding: 0 4px 0 3px;
}
.hscroll i {
  flex: 1;
  height: 15px;
  background: #cdcdcd;
  margin: 0 6px 0 4px;
}
.status {
  height: 25px;
  flex: none;
  display: flex;
  align-items: center;
  padding: 0 3px 0 14px;
  color: #1f3864;
}
.count {
  width: 59px;
}
.views {
  margin-left: auto;
  display: flex;
}
.views button {
  width: 23px;
  height: 23px;
  display: grid;
  place-items: center;
}
.views .on {
  background: #c5ecfb;
  border: 1px solid #2a8dbf;
}
.views svg {
  width: 16px;
  height: 14px;
}

.drag {
  position: absolute;
  left: 224px;
  top: 357px;
  width: 104px;
  height: 104px;
  padding: 8px 4px 8px 8px;
  background: linear-gradient(160deg, rgba(240, 248, 254, 0.6), rgba(205, 230, 248, 0.6));
  box-shadow: 1px 1px 3px #999;
}
.drag svg {
  width: 80px;
  height: 88px;
}
.mark {
  position: absolute;
  right: 48px;
  bottom: 8px;
  width: 194px;
  height: 64px;
}
.mark-text {
  font: 300 30px Roboto, "Liberation Sans", sans-serif;
  fill: #c9d6ee;
  fill-opacity: 0.75;
}

/* taskbar */
.taskbar {
  height: 40px;
  flex: none;
  display: flex;
  background: linear-gradient(90deg, #001722, #001019 60%, #00061a);
}
.task {
  width: 48px;
  display: grid;
  place-items: center;
  margin-right: 1px;
}
.task svg {
  width: 16px;
  height: 16px;
}
.task .i24 {
  width: 24px;
  height: 24px;
}
.start {
  margin: 0;
}
.view {
  margin-right: 3px;
}
.open {
  background: linear-gradient(#76b9ed, #76b9ed) center bottom / 40px 2px no-repeat;
}
.current {
  background: linear-gradient(#76b9ed, #76b9ed) center bottom / 48px 2px no-repeat, #334954;
}
.tasksearch {
  width: 288px;
  background: #f2f2f2;
  border: 1px solid #d0d0d0;
  display: flex;
  align-items: center;
  gap: 11px;
  padding: 0 10px;
}
.tasksearch svg {
  width: 18px;
  height: 18px;
}
.tasksearch input {
  flex: 1;
  font-size: 14px;
}
.tasksearch input::placeholder {
  color: #333;
  opacity: 1;
}
.tray {
  margin-left: auto;
  margin-right: 4px;
  padding-right: 19px;
  border-right: 1px solid #5c6670;
  display: flex;
  align-items: center;
  gap: 8px;
  color: #fff;
}
.tray svg {
  width: 16px;
  height: 16px;
}
.tray .note {
  width: 18px;
  height: 18px;
}
.clock {
  width: 56px;
  margin: 0 8px 0 0;
  display: flex;
  flex-direction: column;
  align-items: center;
  line-height: 18px;
  white-space: nowrap;
}
</style>
